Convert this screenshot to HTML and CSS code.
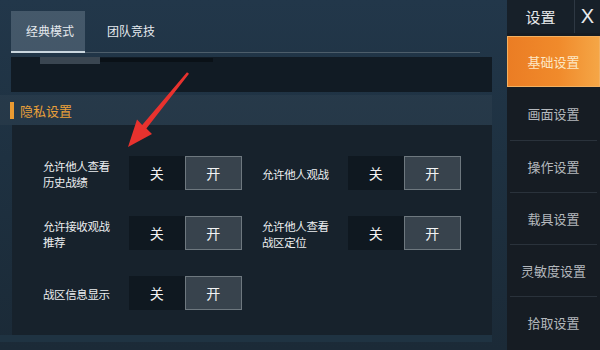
FILE: index.html
```html
<!DOCTYPE html>
<html lang="zh">
<head>
<meta charset="utf-8">
<link rel="stylesheet" href="styles.css">
</head>
<body>
<div class="app">
  <div class="main">
    <div class="tabs">
      <div class="tab active">经典模式</div>
      <div class="tab">团队竞技</div>
    </div>
    <div class="band">
      <div class="thumb"></div>
      <div class="track"></div>
    </div>
    <div class="section-head">
      <span class="mark"></span>
      <span class="section-title">隐私设置</span>
    </div>
    <div class="panel">
      <div class="cell">
        <div class="label">允许他人查看<br>历史战绩</div>
        <div class="toggle"><span class="off">关</span><span class="on">开</span></div>
      </div>
      <div class="cell">
        <div class="label">允许他人观战</div>
        <div class="toggle"><span class="off">关</span><span class="on">开</span></div>
      </div>
      <div class="cell">
        <div class="label">允许接收观战<br>推荐</div>
        <div class="toggle"><span class="off">关</span><span class="on">开</span></div>
      </div>
      <div class="cell">
        <div class="label">允许他人查看<br>战区定位</div>
        <div class="toggle"><span class="off">关</span><span class="on">开</span></div>
      </div>
      <div class="cell">
        <div class="label">战区信息显示</div>
        <div class="toggle"><span class="off">关</span><span class="on">开</span></div>
      </div>
    </div>
    <div class="strip"></div>
  </div>
  <div class="side">
    <div class="side-head">
      <span class="side-title">设置</span>
      <span class="close">X</span>
    </div>
    <div class="nav-item current">基础设置</div>
    <div class="nav-item first">画面设置</div>
    <div class="nav-item">操作设置</div>
    <div class="nav-item">载具设置</div>
    <div class="nav-item">灵敏度设置</div>
    <div class="nav-item">拾取设置</div>
  </div>
</div>
<svg class="arrow" width="600" height="350" viewBox="0 0 600 350">
  <polygon points="128,147 152,134 146.4,128.6 189,73.8 187,72.2 142.2,125 137,119.6" fill="#e8322e"/>
</svg>
</body>
</html>
```
FILE: styles.css
```css
* { box-sizing: border-box; }
html, body { margin: 0; padding: 0; }
body {
  width: 600px;
  height: 350px;
  overflow: hidden;
  position: relative;
  font-family: "Noto Sans CJK SC", "Noto Sans", sans-serif;
  background: linear-gradient(180deg, #22374a 0%, #1e3141 45%, #1b2a37 100%);
  color: #e8eaec;
}
.app { display: flex; height: 350px; }
.main { width: 492px; display: flex; flex-direction: column; }

.tabs {
  margin: 11px 0 0 11px;
  width: 469px;
  height: 42px;
  display: flex;
  border-bottom: 1px solid #4d5e6b;
}
.tab {
  font-size: 12px;
  line-height: 40px;
  color: #e6eaee;
  padding-left: 22px;
}
.tab.active {
  width: 74px;
  padding-left: 15px;
  background: rgba(125, 145, 160, 0.38);
  border-bottom: 2px solid #cad7df;
  margin-bottom: -1px;
  height: 42px;
}
.band {
  margin: 4px 0 0 11px;
  width: 481px;
  height: 35px;
  background: #111b24;
  display: flex;
  align-items: flex-start;
  padding-left: 29px;
}
.thumb { width: 60px; height: 7px; background: #3a4651; }
.track { width: 113px; height: 4px; margin-top: 1px; background: #0a1117; }

.section-head {
  margin-top: 3px;
  height: 30px;
  display: flex;
  align-items: center;
  padding-left: 10px;
  background: rgba(255, 255, 255, 0.03);
}
.mark { width: 4px; height: 17px; background: #e99a32; }
.section-title { margin-left: 6px; font-size: 13px; color: #e9a03a; }

.panel {
  margin-left: 12px;
  width: 480px;
  height: 210px;
  background: #17222c;
  padding: 31px 0 0 31px;
  display: grid;
  grid-template-columns: 199px 199px;
  grid-auto-rows: 34px;
  column-gap: 20px;
  row-gap: 26px;
}
.cell { display: flex; align-items: center; }
.label {
  width: 86px;
  font-size: 11.5px;
  line-height: 16px;
  letter-spacing: -0.4px;
  color: #eceef0;
  padding-top: 2px;
}
.toggle { display: flex; height: 34px; width: 113px; }
.toggle span {
  flex: 1;
  display: flex;
  align-items: center;
  justify-content: center;
  font-size: 14px;
  color: #f2f3f4;
}
.off { background: #0f1820; }
.on { background: #38434d; border: 1px solid #6e787f; }

.strip { height: 7px; background: #1f3342; }

.side {
  width: 93px;
  margin-left: 15px;
  background: #161c23;
  display: flex;
  flex-direction: column;
}
.side-head {
  height: 33px;
  display: flex;
  align-items: center;
  background: #172029;
}
.side-title {
  width: 68px;
  text-align: center;
  font-size: 15px;
  color: #e4e6e8;
  border-right: 1px solid #2e3843;
  line-height: 33px;
}
.close {
  flex: 1;
  text-align: center;
  font-family: "Liberation Sans", sans-serif;
  font-size: 20px;
  color: #e8eaec;
}
.nav-item {
  height: 52px;
  display: flex;
  align-items: center;
  justify-content: center;
  font-size: 13px;
  color: #b4b8bd;
  border-top: 1px solid #2a323b;
  margin: 0 3px;
}
.nav-item.first { border-top: none; height: 53px; }
.nav-item.current {
  margin: 3px 0 0 0;
  height: 51px;
  border: 1px solid #f3b060;
  background: linear-gradient(90deg, #eb7d24 0%, #f08a2b 55%, #f5a646 100%);
  color: #fde7c4;
  font-size: 13px;
}
.arrow { position: absolute; left: 0; top: 0; pointer-events: none; }
```
